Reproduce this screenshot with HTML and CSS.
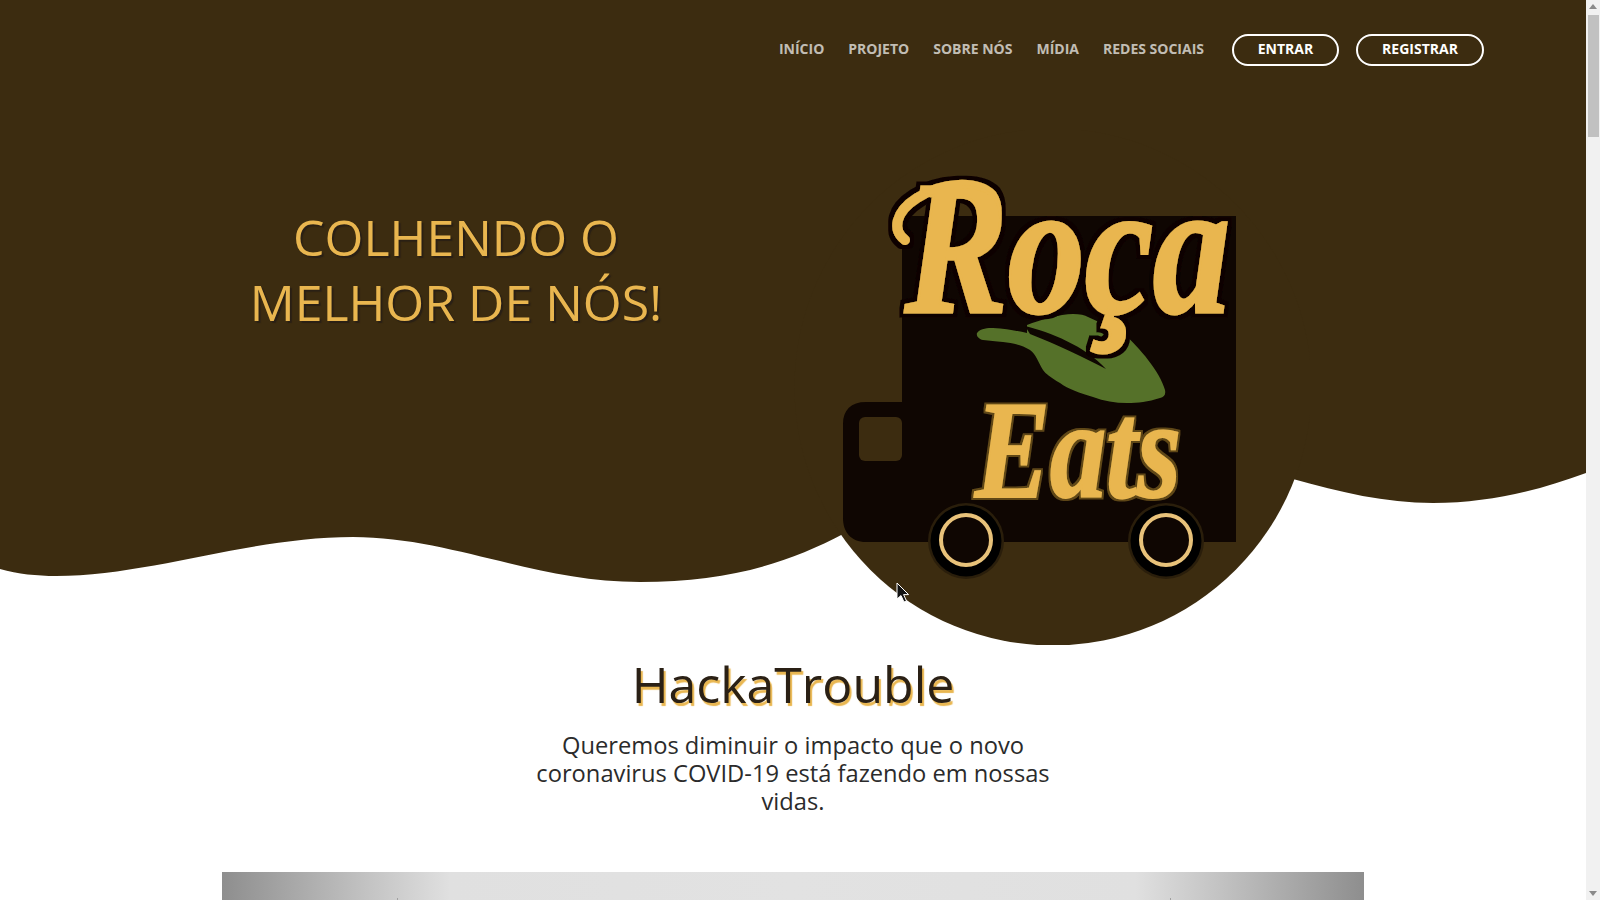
FILE: index.html
```html
<!DOCTYPE html>
<html lang="pt-BR">
<head>
<meta charset="utf-8">
<title>Roça Eats</title>
<link rel="stylesheet" href="styles.css">
</head>
<body>
<div class="page">
  <main class="content">
    <section class="hero">
      <svg class="hero-bg" viewBox="0 0 1586 646" aria-hidden="true">
        <path class="brown" d="M0 569C18 574 37 576 56 576C150 576 250 537 353 537C450 537 535 582 640 582C725 582 785 565 845 533L1293 479C1340 492 1385 503 1433 503C1490 503 1540 490 1586 473V0H0Z"/>
      </svg>
      <nav class="nav">
        <a class="nav-link">INÍCIO</a>
        <a class="nav-link">PROJETO</a>
        <a class="nav-link">SOBRE NÓS</a>
        <a class="nav-link">MÍDIA</a>
        <a class="nav-link">REDES SOCIAIS</a>
        <a class="btn btn-enter">ENTRAR</a>
        <a class="btn btn-register">REGISTRAR</a>
      </nav>
      <div class="hero-row">
        <h1 class="hero-title">COLHENDO O<br>MELHOR DE NÓS!</h1>
        <svg class="logo" viewBox="790 130 520 516" role="img" aria-label="Roça Eats">
          <defs>
            <clipPath id="disc"><rect x="790" y="130" width="520" height="515"/></clipPath>
            <filter id="outline-black" x="-10%" y="-10%" width="120%" height="120%">
              <feMorphology in="SourceAlpha" operator="dilate" radius="4"/>
              <feGaussianBlur stdDeviation="0.5" result="o"/>
              <feFlood flood-color="#0d0501"/>
              <feComposite in2="o" operator="in"/>
              <feMerge><feMergeNode/><feMergeNode in="SourceGraphic"/></feMerge>
            </filter>
            <filter id="outline-brown" x="-10%" y="-10%" width="120%" height="120%">
              <feMorphology in="SourceAlpha" operator="dilate" radius="1.5"/>
              <feGaussianBlur stdDeviation="0.4" result="o"/>
              <feFlood flood-color="#5e4619"/>
              <feComposite in2="o" operator="in"/>
              <feMerge><feMergeNode/><feMergeNode in="SourceGraphic"/></feMerge>
            </filter>
          </defs>
          <circle class="brown" cx="1053" cy="387" r="258.5" clip-path="url(#disc)"/>
          <path class="truck" d="M902 216H1236V542H866C851 542 843 532 843 518V424C843 410 851 402 866 402H902Z"/>
          <rect class="brown" x="859" y="417" width="43" height="44" rx="6"/>
          <circle class="wheel-halo" cx="966" cy="541" r="38"/>
          <circle class="wheel-halo" cx="1166" cy="541" r="38"/>
          <circle class="wheel" cx="966" cy="541" r="35.5"/>
          <circle class="wheel" cx="1166" cy="541" r="35.5"/>
          <circle class="rim" cx="966" cy="540" r="25"/>
          <circle class="rim" cx="1166" cy="540" r="25"/>
          <path class="leaf" d="M977 333C981 328 988 328 993 328C1008 329 1018 331 1027 333L1027 325C1040 320 1060 314 1073 314C1080 314 1085 315 1088 317L1123 333C1140 348 1160 372 1165 390C1166 395 1164 397 1160 398C1148 402 1138 403 1127 403C1115 403 1104 401 1093 397C1080 393 1068 389 1060 383C1050 377 1046 374 1043 370C1038 362 1036 354 1030 350C1022 345 1012 343 1003 342C995 341 990 341 983 340C979 339 976 336 977 333Z"/>
          <path class="vein" d="M1025 326C1050 332 1085 346 1106 369C1085 358 1058 345 1030 334Z"/>
          <g filter="url(#outline-black)">
            <path class="swash" d="M905 240C892 230 895 212 917 198C942 182 977 180 992 195C999 205 998 222 990 232"/>
            <text class="script roca" x="905" y="312" textLength="325" lengthAdjust="spacingAndGlyphs">Roça</text>
          </g>
          <text class="script eats" x="975" y="497" textLength="206" lengthAdjust="spacingAndGlyphs" filter="url(#outline-brown)">Eats</text>
        </svg>
      </div>
    </section>
    <section class="about">
      <h2 class="about-title">HackaTrouble</h2>
      <p class="about-text">Queremos diminuir o impacto que o novo coronavirus COVID-19 está fazendo em nossas vidas.</p>
      <div class="picture"><i class="tick tick-left"></i><i class="tick tick-right"></i></div>
    </section>
    <svg class="cursor" width="14" height="22" viewBox="0 0 14 22" aria-hidden="true">
      <path d="M1 1V17L5 13.5L8 20L10.5 19L7.6 12.6H12.6Z"/>
    </svg>
  </main>
  <aside class="scrollbar" aria-hidden="true">
    <svg class="arrow" width="14" height="14" viewBox="0 0 14 14"><path d="M7 4L11 9H3Z"/></svg>
    <div class="track"><div class="thumb"></div></div>
    <svg class="arrow" width="14" height="14" viewBox="0 0 14 14"><path d="M3 5H11L7 10Z"/></svg>
  </aside>
</div>
</body>
</html>
```
FILE: styles.css
```css
* { box-sizing: border-box; }
html, body { margin: 0; height: 100%; overflow: hidden; background: #fff; }
body { font-family: "Open Sans", "Noto Sans", sans-serif; }
.page { display: flex; width: 1600px; height: 900px; overflow: hidden; }
.content { position: relative; flex: 1; min-width: 0; overflow: hidden; }

.hero { position: relative; height: 646px; padding-top: 34px; }
.hero-bg { position: absolute; left: 0; top: 0; width: 1586px; height: 646px; }
.brown { fill: #3c2c10; }

.nav { position: relative; display: flex; align-items: center; justify-content: flex-end; height: 32px; padding-right: 102px; }
.nav-link { margin-right: 24px; padding-bottom: 3px; font-size: 14px; font-weight: 700; color: rgba(255,255,255,.7); white-space: nowrap; }
.nav-link:nth-child(5) { margin-right: 28px; }
.btn { display: flex; align-items: center; justify-content: center; height: 32px; padding-bottom: 3px; border: 2px solid #fff; border-radius: 16px; font-size: 14px; font-weight: 700; color: #fff; }
.btn-enter { width: 107px; margin-right: 17px; }
.btn-register { width: 128px; }

.hero-row { position: relative; display: flex; padding-top: 64px; padding-left: 222px; height: 580px; }
.hero-title { width: 468px; margin: 75px 0 0; font-size: 50px; line-height: 65px; font-weight: 400; text-align: center; color: #e9b64f; text-shadow: 2px 2px 1px #2a2015; }
.logo { flex: none; width: 520px; height: 516px; margin-left: 100px; }
.truck { fill: #0f0602; }
.wheel-halo { fill: #2a1e0b; }
.wheel { fill: #000; }
.rim { fill: #0f0602; stroke: #e8c27a; stroke-width: 4; }
.leaf { fill: #557129; }
.vein { fill: #0f0602; }
.swash { fill: none; stroke: #e9b64f; stroke-width: 10; stroke-linecap: round; }
.script { font-family: "Liberation Serif", serif; font-weight: 700; font-style: italic; fill: #e9b64f; stroke: #e9b64f; }
.roca { font-size: 190px; stroke-width: 3px; }
.eats { font-size: 140px; stroke-width: 2px; }

.about { display: flex; flex-direction: column; align-items: center; }
.about-title { margin: 9px 0 0; font-size: 50px; line-height: 58px; font-weight: 400; color: #2a2015; text-shadow: 2px 3px 1px #e9b64f; }
.about-text { width: 540px; margin: 18px 0 0; font-size: 23.7px; line-height: 28px; text-align: center; color: #2b2b2b; }
.picture { position: relative; flex: none; width: 1142px; height: 300px; margin-top: 57px; background: linear-gradient(90deg, #8e8e8e 0, #c4c4c4 13%, #e0e0e0 20%, #e2e2e2 50%, #e0e0e0 80%, #c4c4c4 87%, #8e8e8e 100%); }
.tick { position: absolute; top: 26px; width: 1px; height: 2px; background: #a0a0a0; }
.tick-left { left: 175px; }
.tick-right { left: 948px; }

.cursor { position: absolute; left: 896px; top: 582px; }
.cursor path { fill: #111; stroke: #fff; stroke-width: 1; }

.scrollbar { display: flex; flex-direction: column; flex: none; width: 14px; height: 900px; background: #f1f1f1; }
.arrow { flex: none; }
.arrow path { fill: #8a8a8a; }
.track { flex: 1; padding: 1px 1px 0 2px; }
.thumb { height: 122px; background: #c1c1c1; }
```
